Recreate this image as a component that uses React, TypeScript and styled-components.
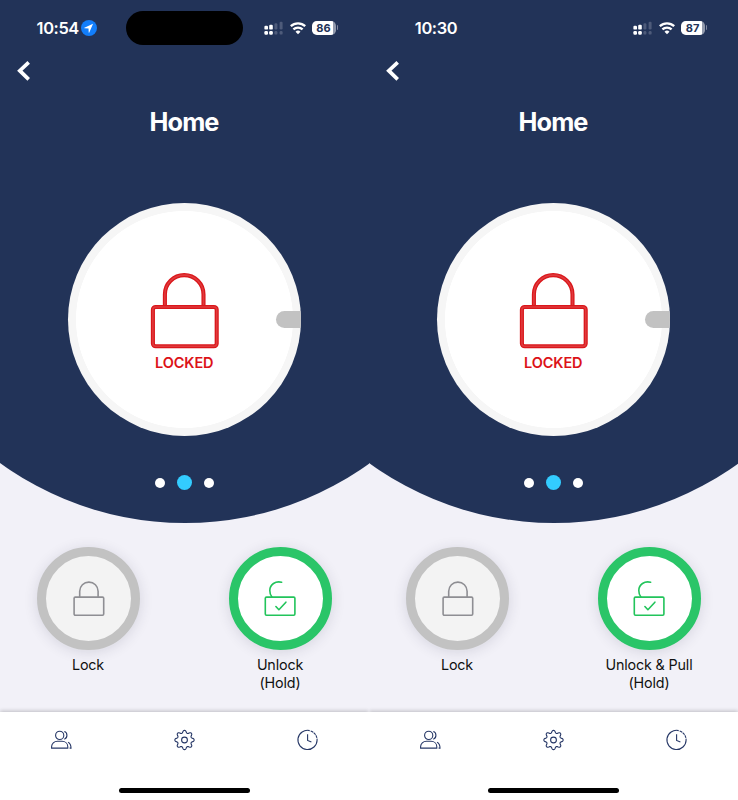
import React from "react";
import styled, { createGlobalStyle } from "styled-components";

const navy = "#223358";

const GlobalStyle = createGlobalStyle`
  *, *::before, *::after { box-sizing: border-box; }
  html, body { margin: 0; padding: 0; }
  body {
    font-family: Inter, "Liberation Sans", sans-serif;
    background: #f2f1f8;
  }
  svg { display: block; flex: none; overflow: visible; }
`;

const Screens = styled.main`
  display: flex;
  width: 738px;
  height: 800px;
  overflow: hidden;
`;

const Phone = styled.section`
  display: flex;
  flex-direction: column;
  width: 369px;
  height: 800px;
  background: #f2f1f8;
  overflow: hidden;
`;

const Hero = styled.div`
  position: relative;
  isolation: isolate;
  display: flex;
  flex-direction: column;
  height: 524px;
  flex: none;
  overflow: hidden;

  &::before {
    content: "";
    position: absolute;
    z-index: -1;
    left: 50%;
    bottom: 0.6px;
    width: 630px;
    height: 630px;
    margin-left: -315px;
    border-radius: 50%;
    background: ${navy};
  }
`;

const StatusBar = styled.div`
  display: flex;
  align-items: center;
  height: 56px;
  flex: none;
`;

const TimeCell = styled.div`
  display: flex;
  align-items: center;
  justify-content: center;
  gap: 2.5px;
  width: 126px;
  padding: 0 0 1px 8px;
  color: #fff;
  font-size: 16.4px;
  font-weight: 600;
  letter-spacing: -0.38px;
  line-height: 20px;
`;

const Island = styled.div<{ $visible: boolean }>`
  width: 117px;
  height: 34px;
  border-radius: 17px;
  background: ${(p) => (p.$visible ? "#000" : "transparent")};
`;

const Indicators = styled.div`
  display: flex;
  align-items: center;
  padding: 0 0 1px 21px;
`;

const WifiSlot = styled.div`
  margin: 0 6.5px;
`;

const Battery = styled.div`
  display: flex;
  align-items: center;
`;

const BatteryBody = styled.div`
  display: flex;
  align-items: center;
  justify-content: center;
  width: 24px;
  height: 14px;
  padding-right: 1px;
  border-radius: 4.8px;
  background: linear-gradient(to right, #fff 21px, #9199ac 21px);
  color: ${navy};
  font-size: 11px;
  font-weight: 700;
  line-height: 14px;
`;

const BatteryTip = styled.div`
  width: 1.5px;
  height: 5px;
  margin-left: 0.5px;
  border-radius: 0 2px 2px 0;
  background: #8088a0;
`;

const BackRow = styled.div`
  height: 44px;
  padding: 5px 0 0 17px;
`;

const Title = styled.h1`
  margin: 5px 0 0;
  padding-right: 1px;
  color: #fff;
  font-size: 25.3px;
  font-weight: 700;
  letter-spacing: -0.9px;
  line-height: 34px;
  text-align: center;
`;

const Dial = styled.div`
  display: flex;
  align-items: center;
  justify-content: space-between;
  width: 233px;
  height: 233px;
  margin: 64px auto 0;
  border-radius: 50%;
  background: radial-gradient(circle, #fff 108.2px, #f6f6f6 108.8px);
  overflow: hidden;

  &::before { content: ""; width: 25px; }
`;

const DialStatus = styled.div`
  display: flex;
  flex-direction: column;
  align-items: center;
  gap: 4px;
  padding-top: 6px;
  color: #dc1218;
  font-size: 14.5px;
  font-weight: 600;
  letter-spacing: -0.1px;
  line-height: 20px;
`;

const DialHandle = styled.div`
  width: 25.5px;
  height: 17px;
  border-radius: 8.5px 0 0 8.5px;
  background: #c2c2c2;
`;

const Pager = styled.div`
  display: flex;
  align-items: center;
  justify-content: center;
  gap: 12px;
  height: 16px;
  margin-top: 38.5px;
`;

const Dot = styled.span<{ $active?: boolean }>`
  width: ${(p) => (p.$active ? 15 : 10)}px;
  height: ${(p) => (p.$active ? 15 : 10)}px;
  border-radius: 50%;
  background: ${(p) => (p.$active ? "#33ccff" : "#fff")};
`;

const Actions = styled.div`
  display: flex;
  justify-content: space-between;
  height: 188px;
  flex: none;
  padding: 23px 37px 0;
`;

const Action = styled.div`
  display: flex;
  flex-direction: column;
  align-items: center;
  width: 103px;
`;

const RoundButton = styled.button<{ $green?: boolean }>`
  display: flex;
  align-items: center;
  justify-content: center;
  width: 103px;
  height: 103px;
  flex: none;
  padding: ${(p) => (p.$green ? "0 1px 0 0" : "0")};
  border: 9px solid ${(p) => (p.$green ? "#2ac568" : "#c2c2c2")};
  border-radius: 50%;
  background: ${(p) => (p.$green ? "#fff" : "#f3f3f3")};
  box-shadow: 0 2px 14px rgba(40, 40, 70, 0.14);
`;

const ActionLabel = styled.div`
  margin-top: 6px;
  padding-right: 1px;
  color: #111;
  font-size: 14.3px;
  font-weight: 400;
  letter-spacing: -0.15px;
  line-height: 18px;
  text-align: center;
  white-space: pre;
`;

const BottomNav = styled.nav`
  display: flex;
  flex-direction: column;
  align-items: center;
  justify-content: space-between;
  height: 88px;
  flex: none;
  padding: 17px 0 7px;
  background: #fff;
  box-shadow: 0 -1px 4px rgba(0, 0, 0, 0.22);
`;

const NavItems = styled.div`
  display: grid;
  grid-template-columns: repeat(3, 1fr);
  justify-items: center;
  width: 100%;
`;

const HomeIndicator = styled.div`
  width: 131px;
  height: 5px;
  border-radius: 3px;
  background: #000;
`;

const LocationIcon = () => (
  <svg width="16" height="16" viewBox="0 0 17 17">
    <circle cx="8.5" cy="8.5" r="8.5" fill="#127efb" />
    <path d="M12.8 4.1 3.6 8.3q-.6.4.2.5l4.2.2.2 4.2q.1.8.6.2z" fill="#fff" />
  </svg>
);

const CellularIcon = () => (
  <svg width="19" height="14" viewBox="0 0 19 14">
    <g fill="#fff">
      <rect x="0.4" y="4.8" width="3.6" height="3.8" rx="1.2" />
      <rect x="5.2" y="3.8" width="3.6" height="4.8" rx="1.2" />
      <rect x="0.4" y="10" width="3.6" height="3.7" rx="1.2" />
      <rect x="5.2" y="10" width="3.6" height="3.7" rx="1.2" />
    </g>
    <g fill="#4e5b7a">
      <rect x="10.4" y="2.2" width="3" height="6.2" rx="1.2" />
      <rect x="15.6" y="0.7" width="3" height="7.7" rx="1.2" />
      <rect x="10.4" y="10" width="3" height="3.6" rx="1.2" />
      <rect x="15.6" y="10" width="3" height="3.6" rx="1.2" />
    </g>
  </svg>
);

const WifiIcon = () => (
  <svg width="16" height="12" viewBox="0 0 16 12" fill="none" stroke="#fff" strokeWidth="2.3">
    <path d="M0.8 4.2a10.4 10.4 0 0 1 14.4 0" />
    <path d="M3.4 7.4a6.6 6.6 0 0 1 9.2 0" />
    <path d="M8 12.2 5.5 9.7a3.5 3.5 0 0 1 5 0z" fill="#fff" stroke="none" />
  </svg>
);

const BackIcon = () => (
  <svg width="14" height="20" viewBox="0 0 14 20" fill="none" stroke="#fff" strokeWidth="3.7">
    <path d="M11.7 1.4 2.8 9.7l8.9 8.6" />
  </svg>
);

const lockShackle = "M14.9 32V21.4a19.3 19.3 0 0 1 38.6 0V32";

const BigLock = () => (
  <svg width="69" height="76" viewBox="0 0 69 76" fill="none">
    <g stroke="#da171b" strokeWidth="4.1">
      <path d={lockShackle} />
      <rect x="2.9" y="34" width="63.8" height="39.3" rx="2.8" />
    </g>
    <g stroke="#e03a3d" strokeWidth="1.6">
      <path d={lockShackle} />
      <rect x="2.9" y="34" width="63.8" height="39.3" rx="2.8" />
    </g>
  </svg>
);

const SmallLock = () => (
  <svg width="32" height="36" viewBox="0 0 32 36" fill="none" stroke="#8e8e93" strokeWidth="1.6">
    <path d="M6.7 16.2V10.3a9.2 9.2 0 0 1 18.4 0v5.9" />
    <rect x="1.1" y="16.1" width="29.6" height="18.2" rx="1.2" />
  </svg>
);

const SmallUnlock = () => (
  <svg
    width="32"
    height="36"
    viewBox="0 0 32 36"
    fill="none"
    stroke="#22c45b"
    strokeWidth="1.6"
    strokeLinecap="round"
    strokeLinejoin="round"
  >
    <path d="M17.6 1.3C11.6-.3 5.9 3.4 5.8 9.4c0 2.7.7 4.9 2.1 6.6" />
    <rect x="1.3" y="16.1" width="29.6" height="18.2" rx="1.2" />
    <path d="M11.9 25.5l3 3.2 7-7.5" />
  </svg>
);

const navIcon = {
  width: 22,
  height: 22,
  viewBox: "0.5 0 22 22",
  fill: "none",
  stroke: "#263766",
  strokeWidth: 1.1,
} as const;

const UsersIcon = () => (
  <svg {...navIcon}>
    <circle cx="9.2" cy="6.4" r="4.1" />
    <path d="M1.1 19.1v-1.3c0-3.3 2.6-5.5 5.8-5.5h4.6c3.2 0 5.8 2.2 5.8 5.5v1.3z" />
    <path d="M13.8 2.5c3.5.8 3.5 6.9 0 7.7M17.6 13.3c1.9 1 2.9 3 2.9 5.8h-1.4" />
  </svg>
);

const gearPath = (() => {
  const points: string[] = [];
  for (let i = 0; i <= 96; i += 1) {
    const a = (i / 96) * Math.PI * 2;
    const wave = Math.cos(a * 8);
    const r = 8.4 + 1.25 * Math.sign(wave) * Math.pow(Math.abs(wave), 0.65);
    points.push(`${(11 + r * Math.sin(a)).toFixed(2)} ${(11 - r * Math.cos(a)).toFixed(2)}`);
  }
  return `M${points.join("L")}z`;
})();

const GearIcon = () => (
  <svg {...navIcon}>
    <path d={gearPath} strokeLinejoin="round" />
    <circle cx="11" cy="11" r="2.9" />
  </svg>
);

const ClockIcon = () => (
  <svg {...navIcon}>
    <path d="M13.2 1.6A9.6 9.6 0 1 0 20.6 11" />
    <path d="M14.2 1.9a9.6 9.6 0 0 1 6.4 9.1" strokeDasharray="2.8 0.6" />
    <path d="M11.1 5.2v6.2l3.8 1.7" />
  </svg>
);

interface ScreenProps {
  time: string;
  battery: number;
  unlockLabel: string;
  sharing?: boolean;
}

const LockScreen = ({ time, battery, unlockLabel, sharing = false }: ScreenProps) => (
  <Phone>
    <Hero>
      <StatusBar>
        <TimeCell>
          {time}
          {sharing && <LocationIcon />}
        </TimeCell>
        <Island $visible={sharing} />
        <Indicators>
          <CellularIcon />
          <WifiSlot><WifiIcon /></WifiSlot>
          <Battery>
            <BatteryBody>{battery}</BatteryBody>
            <BatteryTip />
          </Battery>
        </Indicators>
      </StatusBar>
      <BackRow><BackIcon /></BackRow>
      <Title>Home</Title>
      <Dial>
        <DialStatus>
          <BigLock />
          LOCKED
        </DialStatus>
        <DialHandle />
      </Dial>
      <Pager>
        <Dot />
        <Dot $active />
        <Dot />
      </Pager>
    </Hero>
    <Actions>
      <Action>
        <RoundButton aria-label="Lock"><SmallLock /></RoundButton>
        <ActionLabel>Lock</ActionLabel>
      </Action>
      <Action>
        <RoundButton $green aria-label="Unlock"><SmallUnlock /></RoundButton>
        <ActionLabel>{`${unlockLabel}\n(Hold)`}</ActionLabel>
      </Action>
    </Actions>
    <BottomNav>
      <NavItems>
        <UsersIcon />
        <GearIcon />
        <ClockIcon />
      </NavItems>
      <HomeIndicator />
    </BottomNav>
  </Phone>
);

export default function App() {
  return (
    <>
      <GlobalStyle />
      <Screens>
        <LockScreen time="10:54" battery={86} unlockLabel="Unlock" sharing />
        <LockScreen time="10:30" battery={87} unlockLabel="Unlock & Pull" />
      </Screens>
    </>
  );
}
